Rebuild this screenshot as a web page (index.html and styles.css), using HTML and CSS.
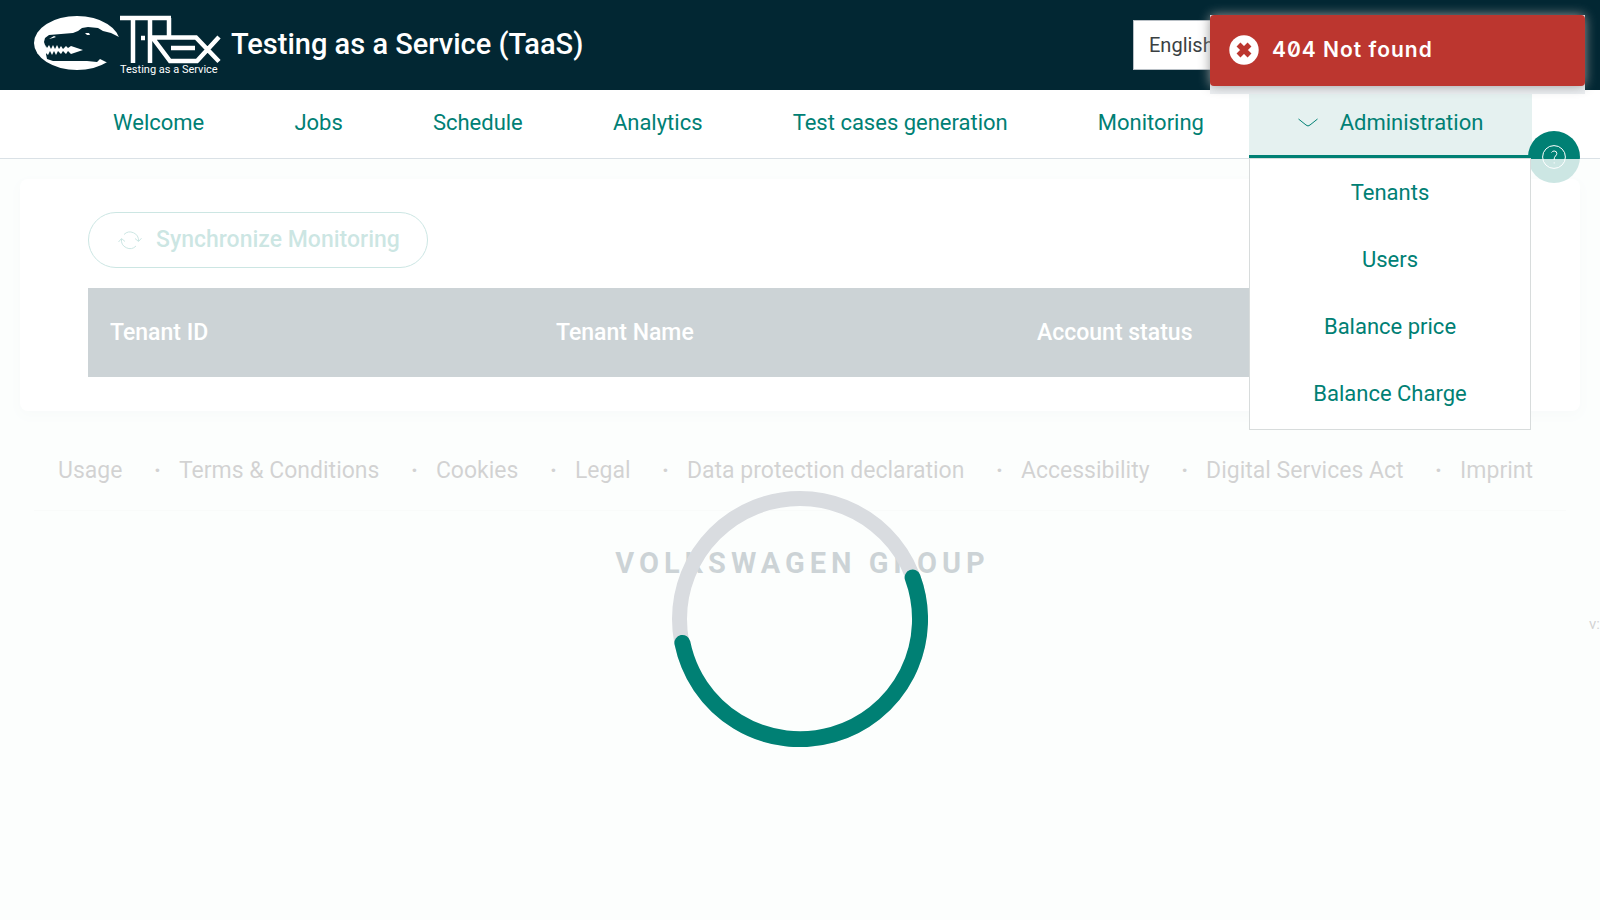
FILE: index.html
```
<!DOCTYPE html>
<html lang="en">
<head>
<meta charset="utf-8">
<title>Testing as a Service (TaaS)</title>
<link rel="stylesheet" href="styles.css">
</head>
<body>
<header class="topbar">
  <a class="brand" href="#">
    <svg class="logo" viewBox="34 14 188 62" role="img" aria-label="T-Rex">
      <ellipse cx="77" cy="43" rx="43" ry="27" fill="#fff"/>
      <path class="ink" d="M44 42l1-4 4-3 24-2 5-2 4-3 6-1 10 1 5 3 8 2 8 4h5v26H108l-8-4-3 3-10-1H53l-6-2-1-5 1-4-2-5z"/>
      <path fill="#fff" d="M45.500 45l1.500 3 2-3 2 4 2-4 2 4 2-4 2 4 2-3 2 3 3-3 2 2 3-2 12 4-12 4-3-3-2 3-3-3-2 3-3-3-2 4-2-4-2 4-2-4-2 4-3-3zM49 39l5-3 2 1-3 1zM85 33l4 0 1 2-3 0z"/>
      <g fill="none" stroke="#fff" stroke-width="4.500">
        <path d="M120 18h51M133 18v45M150 18v45M169 18v19M152 37.500h44l23 24M219 37l-22 24h-27l-18-24"/>
        <path d="M171 48h24M141 38h4"/>
      </g>
      <text class="logo-caption" x="120" y="73">Testing as a Service</text>
    </svg>
    <span class="brand-title">Testing as a Service (TaaS)</span>
  </a>
  <select class="language" aria-label="Language"><option>English</option><option>Deutsch</option></select>
</header>

<nav class="mainnav">
  <a class="nav-item" href="#">Welcome</a>
  <a class="nav-item" href="#">Jobs</a>
  <a class="nav-item" href="#">Schedule</a>
  <a class="nav-item" href="#">Analytics</a>
  <a class="nav-item" href="#">Test cases generation</a>
  <a class="nav-item" href="#">Monitoring</a>
  <div class="nav-group">
    <button class="nav-item nav-open" type="button" aria-expanded="true">
      <svg class="chevron" viewBox="0 0 20 10"><path d="M.5 1l7.500 6q2 2 4 0l7.500-6"/></svg>
      Administration
    </button>
    <div class="menu">
      <a class="menu-item" href="#">Tenants</a>
      <a class="menu-item" href="#">Users</a>
      <a class="menu-item" href="#">Balance price</a>
      <a class="menu-item" href="#">Balance Charge</a>
    </div>
  </div>
</nav>

<button class="help" type="button" aria-label="Help">
  <svg viewBox="0 0 24 24"><circle cx="12" cy="12" r="11.400"/><path d="M9.500 7.500q1-1.500 2.700-1.500 2.600 0 2.600 2.500 0 1.300-1.300 2.500-1.300 1.200-1.300 3v1M12.200 17.300v1.200"/></svg>
</button>

<main class="content">
  <section class="card">
    <button class="sync" type="button">
      <svg viewBox="0 0 24 20"><path d="M6 4.500A8.500 8.500 0 0 1 20.500 11M17 8.500l3.500 3 3-3.300M18 16A8.500 8.500 0 0 1 3.500 9M.5 12l3-3.500 3.500 3"/></svg>
      Synchronize Monitoring
    </button>
    <table class="tenants">
      <thead><tr><th class="col-id">Tenant ID</th><th class="col-name">Tenant Name</th><th>Account status</th></tr></thead>
    </table>
  </section>
  <footer class="footer">
    <ul class="legal">
      <li><a href="#">Usage</a></li>
      <li><a href="#">Terms &amp; Conditions</a></li>
      <li><a href="#">Cookies</a></li>
      <li><a href="#">Legal</a></li>
      <li><a href="#">Data protection declaration</a></li>
      <li><a href="#">Accessibility</a></li>
      <li><a href="#">Digital Services Act</a></li>
      <li><a href="#">Imprint</a></li>
    </ul>
    <p class="group">VOLKSWAGEN GROUP</p>
  </footer>
  <p class="version">v:</p>
</main>

<div class="overlay" role="status" aria-label="Loading">
  <svg class="spinner" viewBox="0 0 256 256">
    <circle cx="128" cy="128" r="120.500" stroke="#d9dce0" stroke-width="15"/>
    <path d="M240.600 86.600A120 120 0 1 1 10.400 151.900" stroke="#008074" stroke-width="16" stroke-linecap="round"/>
  </svg>
</div>

<div class="toasts">
  <div class="toast" role="alert">
    <svg viewBox="0 0 30 30"><circle cx="15" cy="15" r="14.700" fill="#fff"/><path d="M9.500 9.500l11 11M20.500 9.500l-11 11" stroke="#bc362f" stroke-width="5.500"/></svg>
    404 Not found
  </div>
</div>
</body>
</html>
```
FILE: styles.css
```
* { box-sizing: border-box; }
body {
  margin: 0;
  min-height: 100vh;
  overflow: hidden;
  background: #eef8f4;
  color: #222;
  font: 22px/32px Roboto, sans-serif;
}
a { color: inherit; text-decoration: none; }
button { font: inherit; cursor: pointer; }

.topbar {
  display: flex;
  justify-content: space-between;
  align-items: center;
  height: 90px;
  padding: 0 87px 0 34px;
  background: #022733;
}
.brand { display: flex; align-items: center; gap: 9px; color: #fff; }
.logo { width: 188px; height: 62px; }
.logo .ink { fill: #022733; }
.logo-caption { font: 11px Roboto, sans-serif; fill: #fff; }
.brand-title { padding-bottom: 2px; font-size: 29px; font-weight: 500; }
.language {
  width: 380px;
  height: 50px;
  padding: 0 15px;
  border: 1px solid #b9c0c6;
  border-radius: 0;
  background: #fff;
  color: #3a4042;
  font: 20px Roboto, sans-serif;
  appearance: none;
}

.mainnav {
  display: flex;
  height: 69px;
  padding: 0 68px;
  border-bottom: 1px solid #dae1e6;
  background: #fff;
  color: #008074;
}
.nav-item {
  display: flex;
  flex: 1 1 auto;
  justify-content: center;
  align-items: center;
  padding-bottom: 2px;
}
.nav-group { position: relative; width: 283px; }
.nav-open {
  gap: 22px;
  width: 100%;
  height: 68px;
  padding: 1px 0 0;
  border: 0;
  border-bottom: 3px solid #008074;
  background: #e5f1f0;
  color: inherit;
}
.chevron { width: 20px; height: 10px; fill: none; stroke: #008074; }
.menu {
  position: absolute;
  z-index: 3;
  top: 68px;
  left: 0;
  width: 282px;
  padding: 1px 0;
  border: 1px solid #d8dcdc;
  background: #fff;
}
.menu-item {
  display: flex;
  justify-content: center;
  align-items: center;
  height: 67px;
  padding-bottom: 2px;
}

.help {
  position: absolute;
  z-index: 1;
  top: 131px;
  right: 20px;
  display: grid;
  place-items: center;
  width: 52px;
  height: 52px;
  padding: 0;
  border: 0;
  border-radius: 50%;
  background: #008074;
}
.help svg { width: 24px; height: 24px; fill: none; stroke: #fff; }

.content { padding: 20px; }
.card {
  padding: 33px 68px 34px;
  border-radius: 8px;
  background: #fff;
  box-shadow: 0 4px 12px rgba(0, 30, 50, 0.08);
}
.sync {
  display: flex;
  align-items: center;
  gap: 14px;
  height: 56px;
  padding: 0 27px 0 29px;
  border: 1px solid #008074;
  border-radius: 28px;
  background: #fff;
  color: #008074;
  font-size: 23px;
  font-weight: 500;
}
.sync svg { width: 24px; height: 20px; fill: none; stroke: #008074; }
.tenants {
  width: 100%;
  margin-top: 20px;
  border-collapse: collapse;
  background: #002733;
  color: #fff;
}
.tenants th {
  height: 89px;
  padding: 0 22px;
  text-align: left;
  font-size: 23px;
  font-weight: 500;
}
.col-id { width: 446px; }
.col-name { width: 481px; }

.footer { padding: 44px 14px 0; }
.legal {
  display: flex;
  justify-content: space-between;
  margin: 0;
  padding: 0 33px 23px 24px;
  border-bottom: 1px solid #e2e8e6;
  font-size: 23px;
  list-style: none;
}
.legal li { display: flex; }
.legal li + li::before { content: "·"; margin-right: 18px; font-weight: 700; }
.group {
  margin: 36px 0 0;
  padding-left: 5px;
  color: #002733;
  text-align: center;
  font-size: 29px;
  font-weight: 700;
  letter-spacing: 5px;
}
.version { position: absolute; right: 0; margin: 29px 0 0; width: 11px; font-size: 15px; }

.overlay {
  position: fixed;
  z-index: 2;
  top: 159px;
  right: 0;
  bottom: -159px;
  left: 0;
  display: grid;
  place-items: center;
  background: rgba(255, 255, 255, 0.8);
}
.spinner { width: 256px; height: 256px; fill: none; }

.toasts {
  position: fixed;
  z-index: 4;
  top: 15px;
  right: 15px;
  width: 375px;
  padding-bottom: 8px;
  background: #eceff2;
}
.toast {
  display: flex;
  align-items: center;
  gap: 13px;
  height: 71px;
  padding: 0 19px 1px;
  border-radius: 4px;
  background: #bc362f;
  box-shadow: 0 0 12px #999;
  color: #fff;
  font: 600 21px/32px Inter, sans-serif;
  font-feature-settings: "zero";
  letter-spacing: 1px;
}
.toast svg { width: 30px; height: 30px; }
```
